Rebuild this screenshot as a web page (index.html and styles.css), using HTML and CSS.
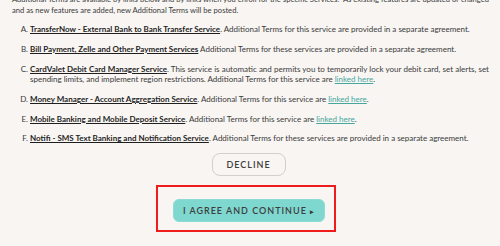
FILE: index.html
```html
<!DOCTYPE html>
<html lang="en">
<head>
<meta charset="utf-8">
<link rel="stylesheet" href="styles.css">
</head>
<body>
<div class="page">
  <p class="intro">Additional Terms are available by links below and by links when you enroll for the specific Services.&nbsp; As existing features are updated or changed and as new features are added, new Additional Terms will be posted.</p>
  <ol class="terms">
    <li><strong>TransferNow - External Bank to Bank Transfer Service</strong>. Additional Terms for this service are provided in a separate agreement.</li>
    <li><strong>Bill Payment, Zelle and Other Payment Services</strong> Additional Terms for these services are provided in a separate agreement.</li>
    <li><strong>CardValet Debit Card Manager Service</strong>. This service is automatic and permits you to temporarily lock your debit card, set alerts, set spending limits, and implement region restrictions. Additional Terms for this service are <a href="#">linked here</a>.</li>
    <li><strong>Money Manager - Account Aggregation Service</strong>. Additional Terms for this service are <a href="#">linked here</a>.</li>
    <li><strong>Mobile Banking and Mobile Deposit Service</strong>. Additional Terms for this service are <a href="#">linked here</a>.</li>
    <li><strong>Notifi - SMS Text Banking and Notification Service</strong>. Additional Terms for these services are provided in a separate agreement.</li>
  </ol>
  <div class="actions">
    <button class="btn decline" type="button">DECLINE</button>
    <div class="highlight">
      <button class="btn agree" type="button">I AGREE AND CONTINUE <span class="arrow">&#9656;</span></button>
    </div>
  </div>
</div>
</body>
</html>
```
FILE: styles.css
```css
html, body {
  margin: 0;
  padding: 0;
  background: #f8f5f2;
}
body {
  font-family: Lato, "Noto Sans", sans-serif;
  font-size: 8px;
  color: #3a3a3a;
}
.page {
  width: 477px;
  margin: -6px 0 0 12px;
}
.intro {
  margin: 0;
  font-size: 7.6px;
  line-height: 10.5px;
  text-align: justify;
}
.terms {
  list-style-type: upper-alpha;
  margin: 9px 0 0 0;
  padding-left: 18px;
  line-height: 10.5px;
  text-align: justify;
}
.terms li {
  margin-bottom: 9.3px;
}
.terms strong {
  font-weight: 700;
  color: #1f1f1f;
  text-decoration: underline;
}
.terms a {
  color: #45a79e;
  text-decoration: underline;
}
.actions {
  display: flex;
  flex-direction: column;
  align-items: center;
  margin-top: 2px;
}
.btn {
  font-family: Lato, "Noto Sans", sans-serif;
  font-size: 9px;
  font-weight: 600;
  letter-spacing: 1px;
  color: #3d3d3d;
  cursor: pointer;
}
.decline {
  width: 74px;
  height: 23px;
  margin-left: -4px;
  background: #f8f5f2;
  border: 1.5px solid #d2d0cd;
  border-radius: 8px;
}
.highlight {
  margin-top: 9px;
  margin-left: -10px;
  border: 2px solid #ee1c1c;
  padding: 12px 9px 8px 15px;
}
.agree {
  width: 152px;
  height: 23px;
  background: #7fd8d0;
  border: 1px solid #8bdcd4;
  border-radius: 6px;
}
.arrow {
  font-size: 7px;
  letter-spacing: 0;
}
```
